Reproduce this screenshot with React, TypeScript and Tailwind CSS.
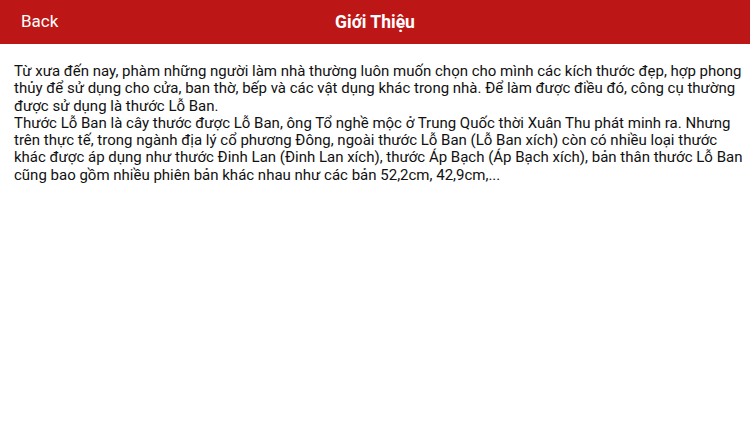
import React from 'react'

const font = { fontFamily: 'Roboto, "Noto Sans", sans-serif' }

const PARAGRAPHS = [
  'Từ xưa đến nay, phàm những người làm nhà thường luôn muốn chọn cho mình các kích thước đẹp, hợp phong thủy để sử dụng cho cửa, ban thờ, bếp và các vật dụng khác trong nhà. Để làm được điều đó, công cụ thường được sử dụng là thước Lỗ Ban.',
  'Thước Lỗ Ban là cây thước được Lỗ Ban, ông Tổ nghề mộc ở Trung Quốc thời Xuân Thu phát minh ra. Nhưng trên thực tế, trong ngành địa lý cổ phương Đông, ngoài thước Lỗ Ban (Lỗ Ban xích) còn có nhiều loại thước khác được áp dụng như thước Đinh Lan (Đinh Lan xích), thước Áp Bạch (Áp Bạch xích), bản thân thước Lỗ Ban cũng bao gồm nhiều phiên bản khác nhau như các bản 52,2cm, 42,9cm,...',
]

export default function App() {
  return (
    <div style={font} className="w-[750px] h-[422px] bg-white flex flex-col">
      <header className="h-[44px] bg-[#bd1616] flex items-center relative shrink-0">
        <button className="pl-[21px] text-white text-[17px]">Back</button>
        <h1 className="absolute left-1/2 -translate-x-1/2 text-white text-[17.5px] font-bold">
          Giới Thiệu
        </h1>
      </header>

      <div className="pl-[14px] pr-[6px] pt-[19px] text-[15px] leading-[17.3px] text-[#111]">
        {PARAGRAPHS.map((p, i) => (
          <p key={i}>{p}</p>
        ))}
      </div>
    </div>
  )
}
